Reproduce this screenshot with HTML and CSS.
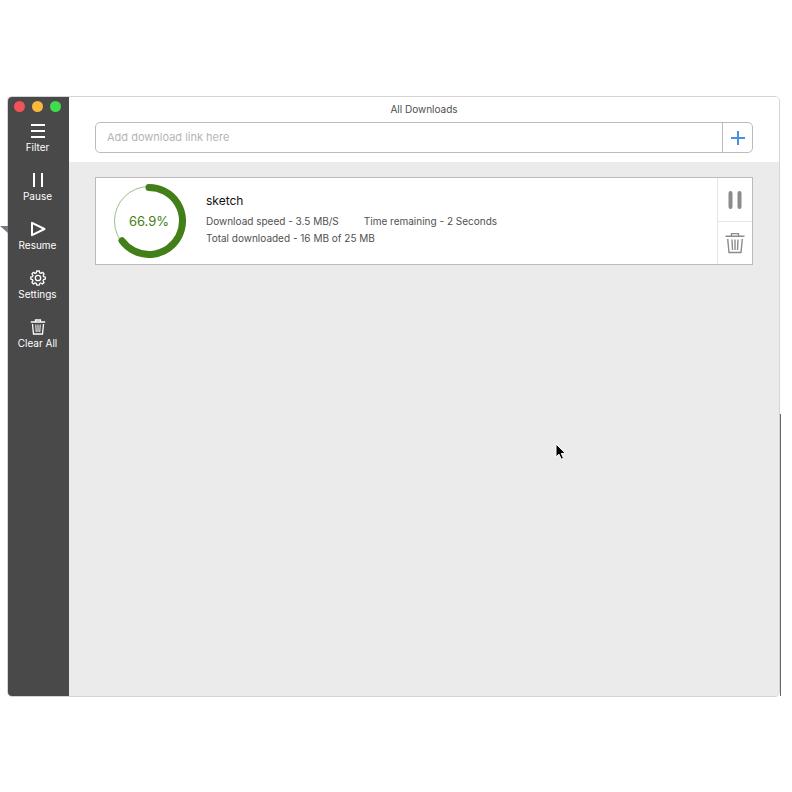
FILE: index.html
```html
<!DOCTYPE html>
<html lang="en">
<head>
<meta charset="utf-8">
<title>All Downloads</title>
<link rel="stylesheet" href="styles.css">
</head>
<body>
<div class="window">
  <nav class="sidebar" aria-label="Download actions">
    <div class="lights">
      <button class="light light-close" aria-label="Close"></button>
      <button class="light light-minimize" aria-label="Minimize"></button>
      <button class="light light-zoom" aria-label="Zoom"></button>
    </div>
    <button class="action">
      <svg class="icon" viewBox="0 0 16 16"><path d="M1 2h14M1 8h14M1 14h14"/></svg>
      Filter
    </button>
    <button class="action">
      <svg class="icon" viewBox="0 0 16 16"><path d="M4 1v14M12 1v14"/></svg>
      Pause
    </button>
    <button class="action">
      <svg class="icon" viewBox="0 0 16 16"><path d="M2 1.800v12.400L14.500 8z" stroke-linejoin="round"/></svg>
      Resume
    </button>
    <button class="action">
      <svg class="icon icon-fine" viewBox="0 0 16 16"><circle cx="8" cy="8" r="2.700"/><path stroke-linejoin="round" d="M6.700 1h2.600l.4 1.900 1.200.5 1.700-1.100 1.500 1.700-1 1.600.5 1.100 1.700.4v2.100l-1.800.5-.5 1.100 1.100 1.700-1.600 1.500-1.600-1-1.200.5-.4 1.600H6.700l-.4-1.700-1.200-.5-1.700 1.100-1.500-1.600 1-1.600-.5-1.200L.8 9.200V7l1.700-.4.5-1.100-1.100-1.600 1.600-1.600 1.600 1.100 1.200-.5z"/></svg>
      Settings
    </button>
    <button class="action">
      <svg class="icon icon-fine" viewBox="0 0 16 16"><path d="M.8 3h14.400M5.500 3V1h5v2M2.500 5l1 10h9l1-10"/><path class="slats" d="M5.800 5.500l.4 7.500M8 5.500V13M10.200 5.500L9.800 13"/></svg>
      Clear All
    </button>
  </nav>
  <main class="content">
    <header class="toolbar">
      <h1 class="title">All Downloads</h1>
      <form class="add-form">
        <input class="add-input" type="text" placeholder="Add download link here" aria-label="Download link">
        <button class="add-button" type="button" aria-label="Add download">
          <svg class="plus" viewBox="0 0 14 14"><path d="M7 0v14M0 7h14"/></svg>
        </button>
      </form>
    </header>
    <article class="card">
      <div class="progress">
        <svg class="ring" viewBox="0 0 74 74"><circle class="ring-track" cx="37" cy="37" r="34.500"/><path class="ring-value" d="M37 3.500A33.500 33.500 0 1 1 10 56.800"/></svg>
        <span class="percent">66.9%</span>
      </div>
      <div class="details">
        <h2 class="name">sketch</h2>
        <p class="stats"><span>Download speed - 3.5 MB/S</span><span>Time remaining - 2 Seconds</span></p>
        <p class="stats">Total downloaded - 16 MB of 25 MB</p>
      </div>
      <div class="controls">
        <button class="control" aria-label="Pause download">
          <svg class="control-icon" viewBox="0 0 20 22"><path class="bars" d="M5.500 5v14M14.500 5v14"/></svg>
        </button>
        <button class="control" aria-label="Delete download">
          <svg class="control-icon" viewBox="0 0 20 22"><path d="M.5 4.200h19M6.500 4V1.600h7V4M2.700 7l1.300 13.500h12L17.300 7M7 7.500l.5 10.500M10 7.500V18M13 7.500L12.500 18"/></svg>
        </button>
      </div>
    </article>
  </main>
  <svg class="cursor" viewBox="0 0 12 18"><path d="M1 1v13l3-2.800 2.200 5 2.300-1-2.200-4.800h4.200z"/></svg>
  <span class="edge-mark"></span>
  <span class="edge-shade"></span>
</div>
</body>
</html>
```
FILE: styles.css
```css
* {
  box-sizing: border-box;
}

body {
  margin: 0;
  min-height: 100vh;
  padding: 96px 12px 95px 7px;
  display: flex;
  background: #fff;
  color: #505050;
  font-family: Inter, "Liberation Sans", sans-serif;
  font-size: 10px;
}

button {
  margin: 0;
  padding: 0;
  border: 0;
  background: none;
  color: inherit;
  font: inherit;
}

svg {
  display: block;
  fill: none;
}

.window {
  position: relative;
  flex: 1;
  display: flex;
  border: 1px solid #d9d3d5;
  border-radius: 5px;
}

.sidebar {
  width: 61px;
  padding-right: 2px;
  display: flex;
  flex-direction: column;
  background: #494949;
  border-radius: 4px 0 0 4px;
  color: #fff;
}

.lights {
  display: flex;
  justify-content: center;
  gap: 7px;
  padding: 4px 0 7px;
}

.light {
  width: 11px;
  height: 11px;
  border-radius: 50%;
}

.light-close {
  background: #f4515b;
}

.light-minimize {
  background: #f8b83e;
}

.light-zoom {
  background: #3fdc4d;
}

.action {
  height: 49px;
  padding-top: 4px;
  display: flex;
  flex-direction: column;
  align-items: center;
  gap: 1px;
  line-height: 14px;
}

.icon {
  width: 16px;
  height: 16px;
  stroke: #fff;
  stroke-width: 2;
}

.icon-fine {
  stroke-width: 1.3;
}

.slats {
  stroke-width: 1;
}

.content {
  flex: 1;
  background: #ebebeb;
  border-radius: 0 4px 4px 0;
}

.toolbar {
  padding: 5px 26px 9px;
  background: #fff;
  border-radius: 0 4px 0 0;
}

.title {
  margin: 0 0 6px;
  font-size: 10px;
  font-weight: 400;
  line-height: 14px;
  text-align: center;
}

.add-form {
  display: flex;
  height: 31px;
  border: 1px solid #bcbaba;
  border-radius: 5px;
}

.add-input {
  flex: 1;
  min-width: 0;
  padding: 0 11px 2px;
  border: 0;
  outline: 0;
  background: none;
  font: inherit;
  font-size: 11px;
}

.add-input::placeholder {
  color: #b5b5b5;
}

.add-button {
  width: 30px;
  display: grid;
  place-items: center;
  border-left: 1px solid #bcbaba;
}

.plus {
  width: 14px;
  height: 14px;
  stroke: #4c8ee0;
  stroke-width: 2;
}

.card {
  margin: 15px 26px 0;
  height: 88px;
  display: flex;
  border: 1px solid #bcbaba;
  background: #fff;
}

.progress {
  display: grid;
  place-items: center;
  margin: 0 20px 0 16px;
}

.ring,
.percent {
  grid-area: 1 / 1;
}

.ring {
  width: 74px;
  height: 74px;
}

.ring-track {
  stroke: #9fbd86;
}

.ring-value {
  stroke: #437f18;
  stroke-width: 7;
  stroke-linecap: round;
}

.percent {
  color: #437f18;
  font-size: 13px;
}

.details {
  flex: 1;
  padding-top: 14px;
}

.name {
  margin: 0 0 4px;
  color: #111;
  font-size: 12px;
  font-weight: 400;
  line-height: 17px;
}

.stats {
  display: flex;
  gap: 25px;
  margin: 0;
  line-height: 17px;
}

.controls {
  width: 35px;
  display: flex;
  flex-direction: column;
  border-left: 1px solid #e8e4e6;
}

.control {
  flex: 1;
  display: grid;
  place-items: center;
}

.control + .control {
  border-top: 1px solid #e8e4e6;
}

.control-icon {
  width: 20px;
  height: 22px;
  stroke: #8c8c8c;
  stroke-width: 1.4;
}

.bars {
  stroke-width: 4;
  stroke-linecap: round;
}

.cursor {
  position: absolute;
  left: 547px;
  top: 346px;
  width: 12px;
  height: 18px;
  fill: #000;
  stroke: #fff;
}

.edge-mark {
  position: absolute;
  left: -8px;
  top: 129px;
  border: solid transparent;
  border-width: 7px 0 0 8px;
  border-top-color: #747981;
}

.edge-shade {
  position: absolute;
  right: -2px;
  top: 317px;
  bottom: 0;
  width: 1px;
  background: #666;
}
```
